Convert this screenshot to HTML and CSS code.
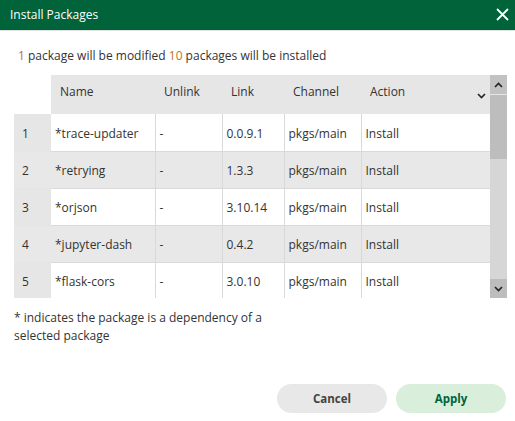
FILE: index.html
```html
<!DOCTYPE html>
<html>
<head>
<meta charset="utf-8">
<link rel="stylesheet" href="styles.css">
</head>
<body>
<div class="dialog">
  <div class="titlebar">
    <span class="title">Install Packages</span>
    <svg class="close" width="13" height="13" viewBox="0 0 13 13"><path d="M1 1L12 12M12 1L1 12" stroke="#fff" stroke-width="1.8" fill="none"/></svg>
  </div>
  <div class="content">
    <p class="summary"><span class="num">1</span> package will be modified <span class="num">10</span> packages will be installed</p>
    <div class="grid-wrap">
      <div class="viewport">
        <table class="grid">
          <colgroup>
            <col class="c-idx"><col class="c-name"><col class="c-unlink"><col class="c-link"><col class="c-chan"><col class="c-act">
          </colgroup>
          <thead>
            <tr>
              <th class="idx-head"></th>
              <th>Name</th>
              <th>Unlink</th>
              <th>Link</th>
              <th>Channel</th>
              <th class="act-head"><span>Action</span>
                <svg class="sort" width="9" height="6" viewBox="0 0 9 6"><path d="M1 1L4.5 4.5L8 1" stroke="#222" stroke-width="1.6" fill="none"/></svg>
              </th>
            </tr>
          </thead>
          <tbody>
            <tr><td class="idx">1</td><td>*trace-updater</td><td>-</td><td>0.0.9.1</td><td>pkgs/main</td><td>Install</td></tr>
            <tr class="alt"><td class="idx">2</td><td>*retrying</td><td>-</td><td>1.3.3</td><td>pkgs/main</td><td>Install</td></tr>
            <tr><td class="idx">3</td><td>*orjson</td><td>-</td><td>3.10.14</td><td>pkgs/main</td><td>Install</td></tr>
            <tr class="alt"><td class="idx">4</td><td>*jupyter-dash</td><td>-</td><td>0.4.2</td><td>pkgs/main</td><td>Install</td></tr>
            <tr><td class="idx">5</td><td>*flask-cors</td><td>-</td><td>3.0.10</td><td>pkgs/main</td><td>Install</td></tr>
          </tbody>
        </table>
      </div>
      <div class="scrollbar">
        <div class="sb-btn sb-up"><svg width="9" height="6" viewBox="0 0 9 6"><path d="M1 5L4.5 1.5L8 5" stroke="#222" stroke-width="1.6" fill="none"/></svg></div>
        <div class="sb-thumb"></div>
        <div class="sb-track"></div>
        <div class="sb-btn sb-down"><svg width="9" height="6" viewBox="0 0 9 6"><path d="M1 1L4.5 4.5L8 1" stroke="#222" stroke-width="1.6" fill="none"/></svg></div>
      </div>
    </div>
    <p class="note">* indicates the package is a dependency of a selected package</p>
  </div>
  <div class="actions">
    <button class="btn cancel">Cancel</button>
    <button class="btn apply">Apply</button>
  </div>
</div>
</body>
</html>
```
FILE: styles.css
```css
* { box-sizing: border-box; }
html, body { margin: 0; padding: 0; }
body {
  width: 515px;
  height: 421px;
  background: #fff;
  font-family: "Open Sans", "Noto Sans", sans-serif;
  color: #333;
  font-size: 12px;
  overflow: hidden;
}
.dialog {
  display: flex;
  flex-direction: column;
  height: 421px;
}
.titlebar {
  height: 31px;
  background: #00633a;
  border-bottom: 1px solid #e0e0e0;
  color: #fff;
  display: flex;
  align-items: center;
  justify-content: space-between;
  padding: 0 6px 1px 10px;
}
.title { font-size: 12px; }
.close { display: block; }
.content { padding: 0 8px 0 14px; flex: 1; }
.summary {
  margin: 17px 0 0 4px;
  line-height: 16px;
}
.num { color: #c0731f; }
.grid-wrap {
  display: flex;
  margin-top: 11px;
  height: 223px;
}
.viewport {
  width: 476px;
  height: 223px;
  overflow: hidden;
}
.grid {
  border-collapse: collapse;
  table-layout: fixed;
  width: 476px;
}
.c-idx { width: 37px; }
.c-name { width: 104px; }
.c-unlink { width: 67px; }
.c-link { width: 62px; }
.c-chan { width: 77px; }
.c-act { width: 129px; }
.grid th {
  height: 39px;
  background: #e6e6e6;
  font-weight: normal;
  text-align: left;
  padding: 0 0 6px 9px;
  color: #333;
}
.grid th.idx-head { background: #fff; }
.act-head { position: relative; }
.sort { position: absolute; right: 4px; top: 18px; }
.grid td {
  height: 37px;
  padding: 2px 0 0 4px;
  border-right: 1px solid #d9d9d9;
  border-bottom: 1px solid #d9d9d9;
  background: #fff;
  white-space: nowrap;
}
.grid tr.alt td { background: #e8e8e8; }
.grid td.idx {
  background: #e6e6e6;
  border-right: none;
  border-bottom-color: #e6e6e6;
  padding-left: 8px;
}
.grid td:last-child { border-right: none; }
.scrollbar {
  width: 17px;
  display: flex;
  flex-direction: column;
  background: #d6d6d6;
}
.sb-btn {
  display: flex;
  align-items: center;
  justify-content: center;
  background: #c2c2c2;
}
.sb-up { height: 20px; border-bottom: 1px solid #e6e6e6; }
.sb-thumb { height: 64px; background: #bdbdbd; }
.sb-track { flex: 1; }
.sb-down { height: 19px; background: #bdbdbd; }
.note {
  margin: 11px 0 0 0;
  width: 270px;
  line-height: 18px;
}
.actions {
  display: flex;
  justify-content: flex-end;
  gap: 9px;
  padding: 0 9px 8px 0;
}
.btn {
  width: 110px;
  height: 29px;
  border: none;
  border-radius: 15px;
  font-family: inherit;
  font-size: 11.5px;
  font-weight: bold;
}
.cancel { background: #e8e8e8; color: #444; }
.apply { background: #d9eedb; color: #00633a; }
```
